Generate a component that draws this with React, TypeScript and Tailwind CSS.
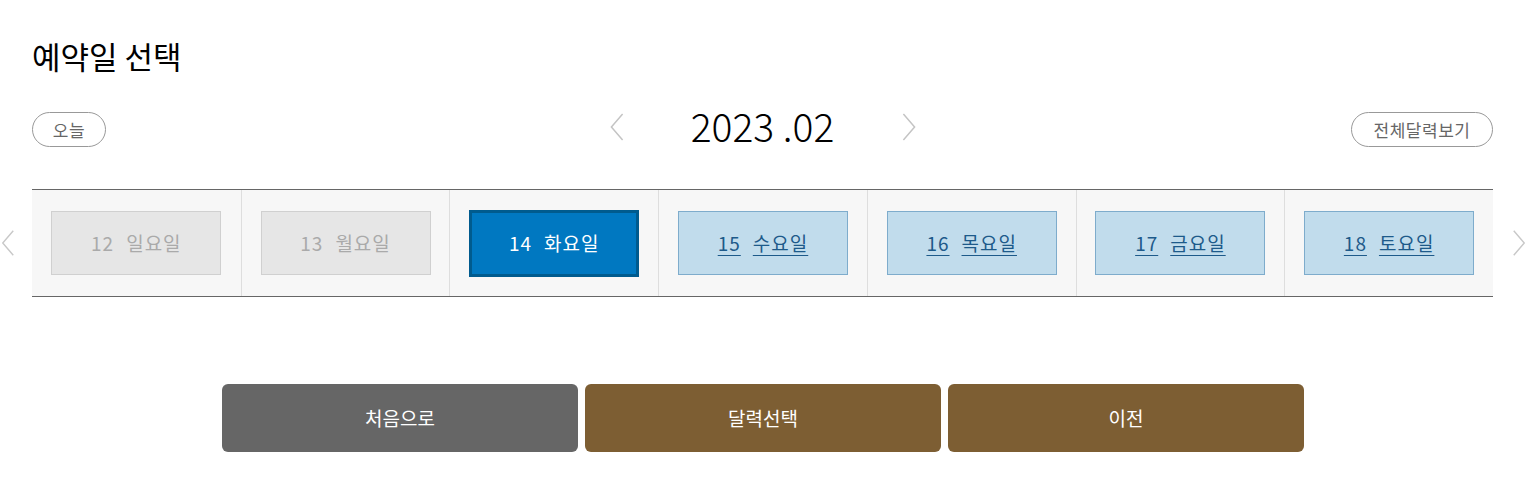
import React from 'react';

const days = [
    { d: 12, w: '일요일', state: 'off' },
    { d: 13, w: '월요일', state: 'off' },
    { d: 14, w: '화요일', state: 'sel' },
    { d: 15, w: '수요일', state: 'on' },
    { d: 16, w: '목요일', state: 'on' },
    { d: 17, w: '금요일', state: 'on' },
    { d: 18, w: '토요일', state: 'on' },
];

function Chevron({ dir, className }: { dir: 'left' | 'right'; className?: string }) {
    return (
        <svg viewBox="0 0 16 30" className={className} fill="none" stroke="currentColor" strokeWidth="1.6">
            {dir === 'left' ? <path d="M14 1 L2 15 L14 29" /> : <path d="M2 1 L14 15 L2 29" />}
        </svg>
    );
}

export default function App() {
    return (
        <div className="w-[1537px] h-[492px] bg-white text-[#111] font-['Noto_Sans_CJK_KR','Noto_Sans',sans-serif]">
            <div className="pl-[32px] w-[1493px]">
                <h2 className="pt-[36px] text-[31px] leading-[40px] text-black">예약일 선택</h2>

                <div className="mt-[36px] grid grid-cols-[1fr_auto_1fr] items-center h-[35px]">
                    <button className="justify-self-start w-[74px] h-[35px] rounded-full border border-[#999] text-[17px] text-[#666] tracking-[0.5px] flex items-center justify-center">
                        오늘
                    </button>
                    <div className="flex items-center -mt-[5px]">
                        <Chevron dir="left" className="w-[16px] h-[28px] text-[#c4c4c4]" />
                        <div className="w-[276px] text-center text-[39px] leading-[40px] font-light text-black -mt-[4px]">2023 .02</div>
                        <Chevron dir="right" className="w-[16px] h-[28px] text-[#c4c4c4]" />
                    </div>
                    <button className="justify-self-end w-[142px] h-[35px] rounded-full border border-[#999] text-[17px] text-[#666] tracking-[0.5px] flex items-center justify-center">
                        전체달력보기
                    </button>
                </div>
            </div>

            <div className="mt-[42px] flex items-center">
                <div className="w-[32px] flex justify-start pl-[1px]">
                    <Chevron dir="left" className="w-[14px] h-[28px] text-[#c8c8c8]" />
                </div>
                <div className="w-[1461px] grid grid-cols-7 border-t border-b border-[#666] bg-[#f7f7f7] h-[108px]">
                    {days.map((x, i) => (
                        <div key={x.d} className={`flex items-center justify-center ${i > 0 ? 'border-l border-[#dedede]' : ''}`}>
                            {x.state === 'off' && (
                                <div className="w-[170px] h-[64px] border border-[#d0d0d0] bg-[#e6e6e6] flex items-center justify-center gap-[12px] text-[19px] tracking-[1px] text-[#aaa]">
                                    <span>{x.d}</span>
                                    <span>{x.w}</span>
                                </div>
                            )}
                            {x.state === 'sel' && (
                                <div className="w-[170px] h-[67px] border-[3px] border-[#005b8e] bg-[#0078c1] flex items-center justify-center gap-[12px] text-[19px] tracking-[1px] text-white">
                                    <span>{x.d}</span>
                                    <span>{x.w}</span>
                                </div>
                            )}
                            {x.state === 'on' && (
                                <div className="w-[170px] h-[64px] border border-[#7eaccc] bg-[#c1dcec] flex items-center justify-center gap-[12px] text-[19px] tracking-[1px] text-[#1d5a8a]">
                                    <span className="underline underline-offset-[4px] decoration-1">{x.d}</span>
                                    <span className="underline underline-offset-[4px] decoration-1">{x.w}</span>
                                </div>
                            )}
                        </div>
                    ))}
                </div>
                <div className="pl-[19px] flex justify-start">
                    <Chevron dir="right" className="w-[14px] h-[28px] text-[#c8c8c8]" />
                </div>
            </div>

            <div className="mt-[87px] flex justify-center gap-[7px] pr-[11px]">
                <button className="w-[356px] h-[68px] rounded-[6px] bg-[#666] text-white text-[19px]">처음으로</button>
                <button className="w-[356px] h-[68px] rounded-[6px] bg-[#7d5e33] text-white text-[19px]">달력선택</button>
                <button className="w-[356px] h-[68px] rounded-[6px] bg-[#7d5e33] text-white text-[19px]">이전</button>
            </div>
        </div>
    );
}
